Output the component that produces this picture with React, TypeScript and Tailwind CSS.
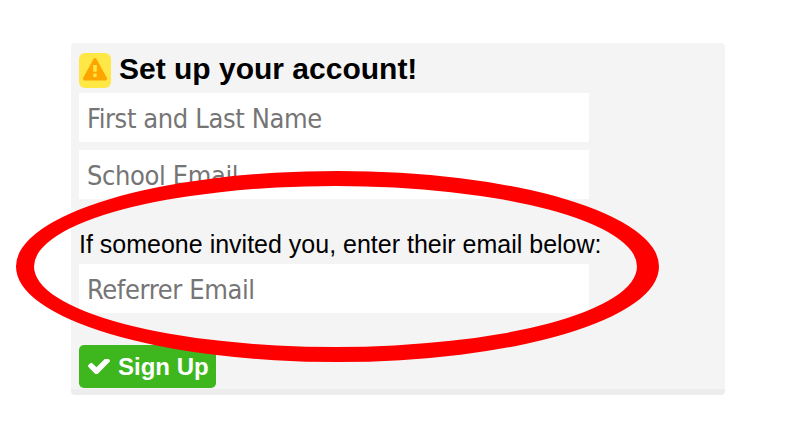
const inputClass =
  'block h-[49px] w-[510px] rounded-none bg-white px-2 pt-0.5 font-["DejaVu_Sans_Condensed","DejaVu_Sans",sans-serif] text-[27px] tracking-[-0.38px] text-[#757575] outline-none placeholder:text-[#757575] placeholder:opacity-100 [font-stretch:condensed]';

function WarningIcon() {
  return (
    <svg viewBox="0 0 1792 1664" className="h-[22.5px] w-6" fill="#ffa500" aria-hidden="true">
      <path d="M1024 1375v-190q0-14-9.5-23.5t-22.5-9.5h-192q-13 0-22.5 9.5t-9.5 23.5v190q0 14 9.5 23.5t22.5 9.5h192q13 0 22.5-9.5t9.5-23.5zm-2-374l18-459q0-12-10-19-13-11-24-11h-220q-11 0-24 11-10 7-10 21l17 457q0 10 10 16.5t24 6.5h185q14 0 23.5-6.5t10.5-16.5zm-14-934l768 1408q35 63-2 126-17 29-46.5 46t-63.5 17h-1536q-34 0-63.5-17t-46.5-46q-37-63-2-126l768-1408q17-31 47-49t65-18 65 18 47 49z" />
    </svg>
  );
}

function CheckIcon() {
  return (
    <svg viewBox="121 434 1550 1088" className="h-[15.5px] w-[22px]" fill="#ffffff" aria-hidden="true">
      <path d="M1671 566q0 40-28 68l-724 724-136 136q-28 28-68 28t-68-28l-136-136-362-362q-28-28-28-68t28-68l136-136q28-28 68-28t68 28l294 295 656-657q28-28 68-28t68 28l136 136q28 28 28 68z" />
    </svg>
  );
}

export default function App() {
  return (
    <main className="relative h-[437px] w-[798px] overflow-hidden bg-white pl-[71px] pt-[43px] font-['Liberation_Sans',Arial,sans-serif] text-black">
      <form className="flex h-[352px] w-[654px] flex-col items-start rounded-[4px] border-b-[6px] border-[#ededed] bg-[#f4f4f4] px-2 pt-[10px]">
        <div className="flex h-[35px] items-start gap-2">
          <span className="flex h-[35px] w-8 items-start justify-center rounded-[6px] bg-[#ffe746] pt-[5px]">
            <WarningIcon />
          </span>
          <h1 className="text-[30px] font-bold leading-[31px] whitespace-nowrap">Set up your account!</h1>
        </div>
        <input className={`${inputClass} mt-[5px]`} placeholder="First and Last Name" />
        <input className={`${inputClass} mt-2`} placeholder="School Email" />
        <label htmlFor="referrer" className="mt-[31px] h-[34px] text-[25px] leading-[29px] whitespace-nowrap">
          If someone invited you, enter their email below:
        </label>
        <input id="referrer" className={inputClass} placeholder="Referrer Email" />
        <button
          type="button"
          className="mt-8 flex h-[43px] w-[137px] shrink-0 items-center gap-2 rounded-[5px] bg-[#3eb71e] pl-[9px] text-2xl font-bold whitespace-nowrap text-white"
        >
          <CheckIcon />
          Sign Up
        </button>
      </form>
      <svg className="pointer-events-none absolute inset-0 h-full w-full" viewBox="0 0 798 437" aria-hidden="true">
        <path
          fill="#ff0000"
          fillRule="evenodd"
          d="M16 266.5a321.5 95.5 0 1 0 643 0a321.5 95.5 0 1 0-643 0ZM34 266.5a301.5 80.5 0 1 0 603 0a301.5 80.5 0 1 0-603 0Z"
        />
      </svg>
    </main>
  );
}
